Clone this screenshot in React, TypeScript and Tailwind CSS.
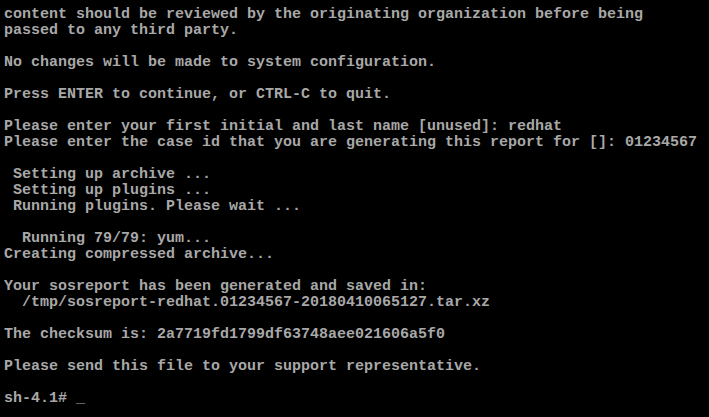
const lines = [
  "content should be reviewed by the originating organization before being",
  "passed to any third party.",
  "",
  "No changes will be made to system configuration.",
  "",
  "Press ENTER to continue, or CTRL-C to quit.",
  "",
  "Please enter your first initial and last name [unused]: redhat",
  "Please enter the case id that you are generating this report for []: 01234567",
  "",
  " Setting up archive ...",
  " Setting up plugins ...",
  " Running plugins. Please wait ...",
  "",
  "  Running 79/79: yum...",
  "Creating compressed archive...",
  "",
  "Your sosreport has been generated and saved in:",
  "  /tmp/sosreport-redhat.01234567-20180410065127.tar.xz",
  "",
  "The checksum is: 2a7719fd1799df63748aee021606a5f0",
  "",
  "Please send this file to your support representative.",
  "",
  "sh-4.1# _",
];

export default function App() {
  return (
    <div className="w-[709px] h-[417px] bg-black overflow-hidden pl-[4px] pt-[7px]">
      <div className="font-['Liberation_Mono',monospace] font-bold text-[15px] leading-[16px] text-[#a8a8a8] whitespace-pre">
        {lines.map((line, i) => (
          <div key={i} className="h-[16px]">
            {line}
          </div>
        ))}
      </div>
    </div>
  );
}
